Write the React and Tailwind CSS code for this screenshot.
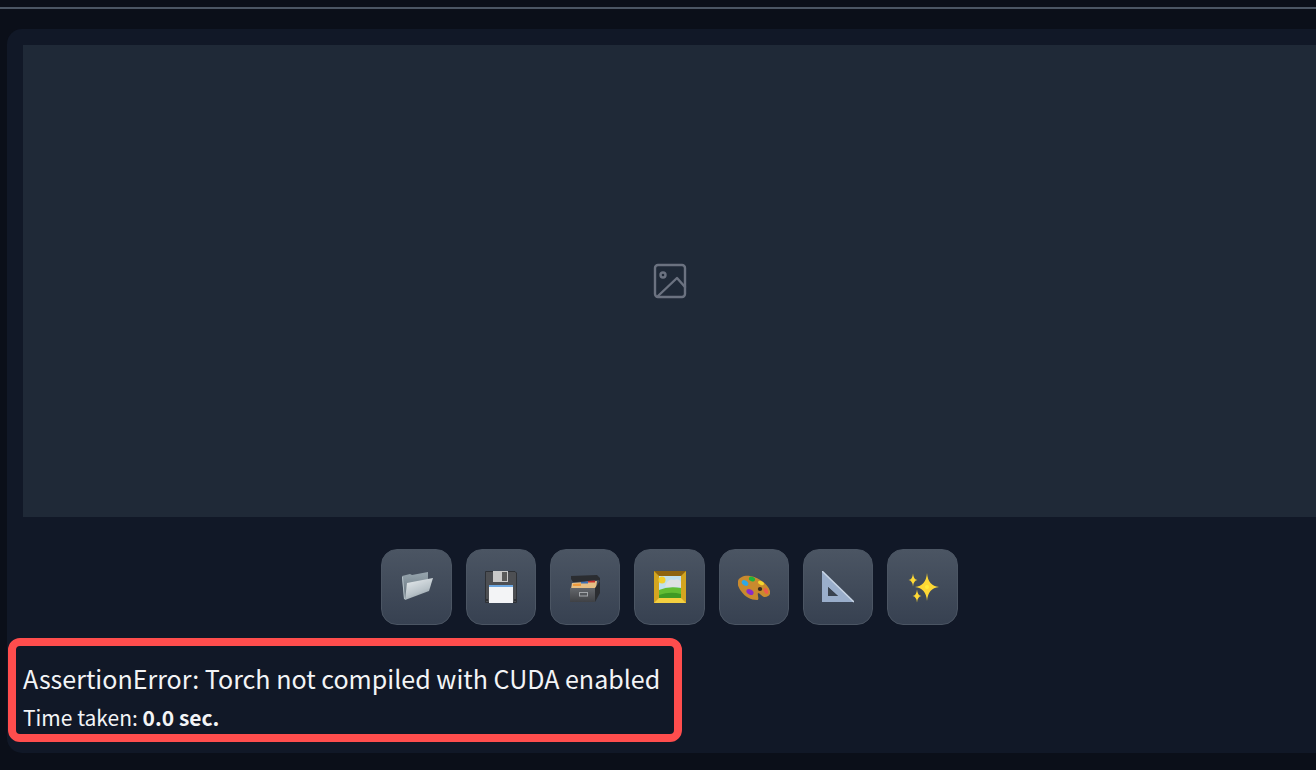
const FolderIcon = () => (
  <svg width="32" height="32" viewBox="0 0 32 32">
    <defs>
      <linearGradient id="fa" x1="0" y1="0" x2="0" y2="1"><stop offset="0" stopColor="#98a6af" /><stop offset="1" stopColor="#5d6b75" /></linearGradient>
      <linearGradient id="fb" x1="0.2" y1="0" x2="0.7" y2="1"><stop offset="0" stopColor="#e4e9ec" /><stop offset="0.6" stopColor="#b9c3c9" /><stop offset="1" stopColor="#8a979f" /></linearGradient>
    </defs>
    <path d="M1 5 L9 3 L11 4 L27 1 L27 8 L6 28 L3 29 Z" fill="url(#fa)" />
    <path d="M6 12 L32 7 L28 20 L4 29 Z" fill="url(#fb)" />
    <path d="M1.5 6 L3.5 28" stroke="#b6c2c9" strokeWidth="1" fill="none" />
  </svg>
);

const FloppyIcon = () => (
  <svg width="32" height="32" viewBox="0 0 32 32">
    <path d="M0.5 0.5 H30 L31.5 2 V31.5 H0.5 Z" fill="#4d4f53" stroke="#2e3136" strokeWidth="1" />
    <rect x="8" y="0" width="15" height="11" fill="#c9c9c9" />
    <rect x="17" y="1" width="5" height="9" fill="#5a5a5a" />
    <rect x="4" y="14" width="24" height="18" fill="#f3f4f6" />
    <rect x="4" y="14" width="24" height="2" fill="#6ca6e0" />
    <rect x="1" y="28" width="2" height="2" fill="#2e3136" />
    <rect x="29" y="28" width="2" height="2" fill="#2e3136" />
  </svg>
);

const CabinetIcon = () => (
  <svg width="32" height="32" viewBox="0 0 32 32">
    <defs>
      <linearGradient id="ca" x1="0" y1="0" x2="0" y2="1"><stop offset="0" stopColor="#63666b" /><stop offset="1" stopColor="#3f4145" /></linearGradient>
    </defs>
    <path d="M2 5 L28 4 L31 7 L31 11 L30 9 L7 11 L4 11 L2 8 Z" fill="#2b2d31" />
    <path d="M3 12 L28 10 L27 18 L2 18 Z" fill="#e6bf85" />
    <path d="M4 13 L12 12.5 V15 H4 Z" fill="#ef9a3c" />
    <path d="M12 11 L19 10.6 V12.4 H12 Z" fill="#3b6fb5" />
    <path d="M19 10 L26 9.6 V11.4 H19 Z" fill="#c9302c" />
    <rect x="1" y="17" width="25" height="14" fill="url(#ca)" />
    <path d="M26 17 L31 10 V22 L26 31 Z" fill="#2b2d31" />
    <rect x="10.5" y="21.5" width="8" height="3.5" fill="#55585c" stroke="#a2a5a9" strokeWidth="1" />
  </svg>
);

const PictureIcon = () => (
  <svg width="32" height="32" viewBox="0 0 32 32">
    <rect width="32" height="32" fill="#d4a520" />
    <path d="M0 0 H32 L27 5 H5 Z" fill="#8f6410" />
    <path d="M0 32 H32 L27 27 H5 Z" fill="#f5d040" />
    <rect x="5" y="5" width="22" height="22" fill="#bfe0ee" />
    <circle cx="8" cy="9" r="3.5" fill="#f4d02d" />
    <path d="M12 13 Q15 7 20 9 Q25 7 27 11 V16 H11 Z" fill="#dfe1e3" />
    <path d="M5 19 Q14 15 27 17 V27 H5 Z" fill="#63bd33" />
    <path d="M5 24 Q16 20 27 23 V27 H5 Z" fill="#3f9a24" />
  </svg>
);

const PaletteIcon = () => (
  <svg width="32" height="32" viewBox="0 0 32 32">
    <path d="M0 10 C1 6 7 4 12 5 C20 6 30 13 32 20 C33 24 30 26 27 26 C24 26 22 22 20 22 C19 24 22 29 19 29 C13 29 7 26 3 20 C1 17 -1 14 0 10 Z" fill="#c98a2e" />
    <ellipse cx="7" cy="12" rx="3.6" ry="2.4" fill="#2fa8e6" transform="rotate(35 7 12)" />
    <ellipse cx="14" cy="8" rx="3.2" ry="2.3" fill="#1fb33c" transform="rotate(25 14 8)" />
    <ellipse cx="23" cy="12" rx="3.2" ry="1.8" fill="#f2d52e" transform="rotate(25 23 12)" />
    <ellipse cx="28" cy="20" rx="3.2" ry="1.8" fill="#ef5a4c" transform="rotate(60 28 20)" />
    <ellipse cx="12" cy="21" rx="3.8" ry="2.6" fill="#8a2bc9" transform="rotate(30 12 21)" />
    <ellipse cx="22" cy="18" rx="2.2" ry="1.9" fill="#3a2a1c" />
  </svg>
);

const TriangleIcon = () => (
  <svg width="32" height="32" viewBox="0 0 32 32">
    <path fillRule="evenodd" d="M0 0 L32 31 H0 Z M6 16 V25 H16 Z" fill="#9aaecb" />
    <path d="M0 0 L32 31" stroke="#c9d6e6" strokeWidth="1.5" fill="none" />
    <path d="M6 16 V25 H16 Z" fill="#39424f" />
  </svg>
);

const SparklesIcon = () => (
  <svg width="32" height="32" viewBox="0 0 32 32">
    <path d="M20 2 Q21 15 32 16 Q21 17 20 30 Q19 17 8 16 Q19 15 20 2 Z" fill="#fdd835" />
    <circle cx="20" cy="16" r="2" fill="#ffeb3b" />
    <path d="M6 2.5 Q6.5 8.5 10.5 9 Q6.5 9.5 6 15.5 Q5.5 9.5 1.5 9 Q5.5 8.5 6 2.5 Z" fill="#fdd835" />
    <path d="M10 18.5 Q10.5 24.5 14.5 25 Q10.5 25.5 10 31.5 Q9.5 25.5 5.5 25 Q9.5 24.5 10 18.5 Z" fill="#fdd835" />
  </svg>
);

const tools = [
  { w: "w-[71px]", icon: <FolderIcon /> },
  { w: "w-[70px]", icon: <FloppyIcon /> },
  { w: "w-[70px]", icon: <CabinetIcon /> },
  { w: "w-[71px]", icon: <PictureIcon /> },
  { w: "w-[70px]", icon: <PaletteIcon /> },
  { w: "w-[70px]", icon: <TriangleIcon /> },
  { w: "w-[71px]", icon: <SparklesIcon /> },
];

export default function App() {
  return (
    <div className="h-[770px] w-[1316px] overflow-hidden bg-[#0b0f19] pt-[7px] font-['Noto_Sans_CJK_SC','Noto_Sans',sans-serif]">
      <div className="h-[2px] w-full bg-[#4b5563]" />
      <div className="ml-[7px] mt-[20px] h-[724px] w-[1326px] rounded-[15px] bg-[#111827] px-4 pt-4">
        <div className="flex h-[472px] w-[1294px] items-center justify-center bg-[#1f2937]">
          <svg width="40" height="40" viewBox="0 0 40 40" fill="none" stroke="#6b7280" strokeWidth="2.4" strokeLinecap="round" strokeLinejoin="round">
            <rect x="5" y="4" width="30" height="32" rx="3" />
            <circle cx="13" cy="14" r="2.5" />
            <path d="M8 35 L27 17 L35 26" />
          </svg>
        </div>
        <div className="mt-8 flex w-[1293px] justify-center gap-[14px]">
          {tools.map((t, i) => (
            <button key={i} className={`flex h-[76px] ${t.w} items-center justify-center rounded-[16px] border border-[#4b5563] bg-gradient-to-b from-[#4b5563] to-[#374151]`}>
              {t.icon}
            </button>
          ))}
        </div>
        <div className="-ml-[15px] mt-[13px] h-[104px] w-[674px] rounded-[12px] border-[8px] border-[#ff4d4d] bg-[#111827] pl-[7px] pt-[13px] text-[#f3f4f6]">
          <div className="text-[25.06px] leading-[38px] whitespace-nowrap">AssertionError: Torch not compiled with CUDA enabled</div>
          <div className="text-[21px] leading-[40px] whitespace-nowrap">Time taken: <span className="font-bold">0.0 sec.</span></div>
        </div>
      </div>
    </div>
  );
}
